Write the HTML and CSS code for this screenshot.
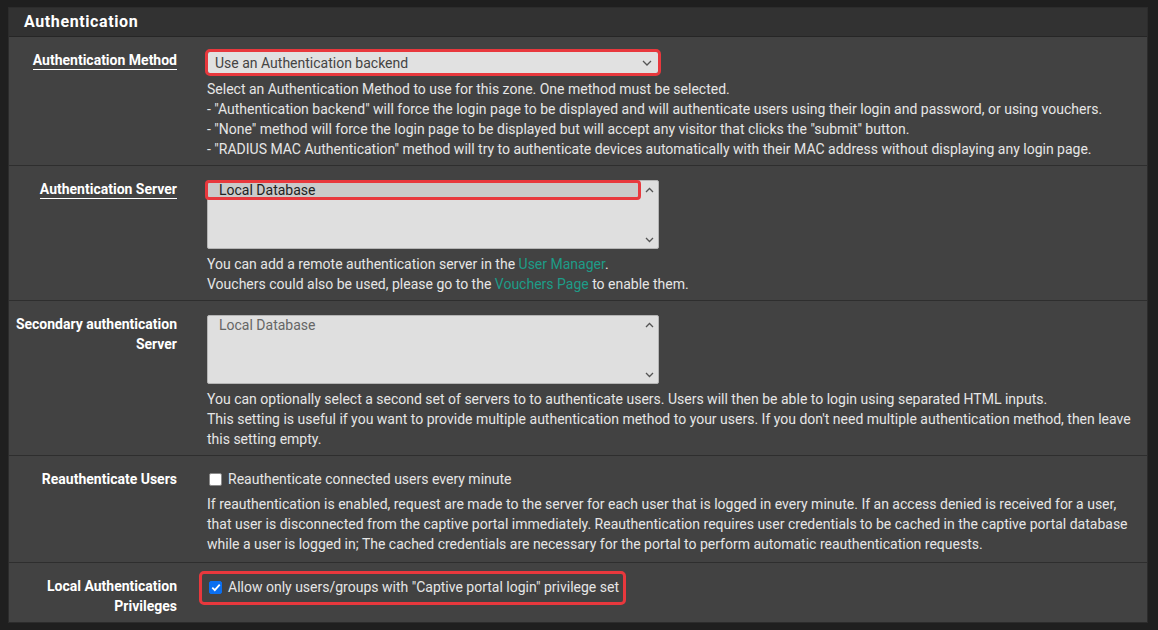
FILE: index.html
```html
<!DOCTYPE html>
<html lang="en">
<head>
  <meta charset="UTF-8" />
  <title>Captive Portal - Authentication</title>
  <link rel="stylesheet" href="styles.css">
</head>
<body>
  <div class="panel">
    <div class="panel-heading">Authentication</div>

    <div class="form-row">
      <div class="form-label"><span class="underlined">Authentication Method</span></div>
      <div class="form-field">
        <div class="highlight select-wrap">
          <div class="select">
            <span>Use an Authentication backend</span>
            <svg class="chevron" width="10" height="6" viewBox="0 0 10 6"><path d="M1 1l4 4 4-4" fill="none" stroke="#555" stroke-width="1.3"/></svg>
          </div>
        </div>
        <div class="help tight">
          Select an Authentication Method to use for this zone. One method must be selected.<br>
          - "Authentication backend" will force the login page to be displayed and will authenticate users using their login and password, or using vouchers.<br>
          - "None" method will force the login page to be displayed but will accept any visitor that clicks the "submit" button.<br>
          - "RADIUS MAC Authentication" method will try to authenticate devices automatically with their MAC address without displaying any login page.
        </div>
      </div>
    </div>

    <div class="form-row">
      <div class="form-label"><span class="underlined">Authentication Server</span></div>
      <div class="form-field">
        <div class="listbox">
          <div class="options">
            <div class="option selected highlight-option">Local Database</div>
          </div>
          <div class="scroller">
            <svg width="9" height="6" viewBox="0 0 9 6"><path d="M1 5l3.5-3.5L8 5" fill="none" stroke="#555" stroke-width="1.3"/></svg>
            <svg width="9" height="6" viewBox="0 0 9 6"><path d="M1 1l3.5 3.5L8 1" fill="none" stroke="#555" stroke-width="1.3"/></svg>
          </div>
        </div>
        <div class="help">
          You can add a remote authentication server in the <a href="#">User Manager</a>.<br>
          Vouchers could also be used, please go to the <a href="#">Vouchers Page</a> to enable them.
        </div>
      </div>
    </div>

    <div class="form-row">
      <div class="form-label">Secondary authentication Server</div>
      <div class="form-field">
        <div class="listbox">
          <div class="options">
            <div class="option muted">Local Database</div>
          </div>
          <div class="scroller">
            <svg width="9" height="6" viewBox="0 0 9 6"><path d="M1 5l3.5-3.5L8 5" fill="none" stroke="#555" stroke-width="1.3"/></svg>
            <svg width="9" height="6" viewBox="0 0 9 6"><path d="M1 1l3.5 3.5L8 1" fill="none" stroke="#555" stroke-width="1.3"/></svg>
          </div>
        </div>
        <div class="help">
          You can optionally select a second set of servers to to authenticate users. Users will then be able to login using separated HTML inputs.<br>
          This setting is useful if you want to provide multiple authentication method to your users. If you don't need multiple authentication method, then leave this setting empty.
        </div>
      </div>
    </div>

    <div class="form-row roomy">
      <div class="form-label">Reauthenticate Users</div>
      <div class="form-field">
        <label class="check">
          <span class="box"></span>
          Reauthenticate connected users every minute
        </label>
        <div class="help">
          If reauthentication is enabled, request are made to the server for each user that is logged in every minute. If an access denied is received for a user, that user is disconnected from the captive portal immediately. Reauthentication requires user credentials to be cached in the captive portal database while a user is logged in; The cached credentials are necessary for the portal to perform automatic reauthentication requests.
        </div>
      </div>
    </div>

    <div class="form-row last">
      <div class="form-label">Local Authentication Privileges</div>
      <div class="form-field">
        <label class="check highlight check-wrap">
          <span class="box checked">
            <svg width="10" height="9" viewBox="0 0 10 9"><path d="M1.3 4.6l2.5 2.5L8.7 1.6" fill="none" stroke="#fff" stroke-width="1.8"/></svg>
          </span>
          Allow only users/groups with "Captive portal login" privilege set
        </label>
      </div>
    </div>
  </div>
</body>
</html>
```

FILE: styles.css
```css
* {
  box-sizing: border-box;
  margin: 0;
  padding: 0;
}

body {
  background: #1f1f1f;
  font-family: Roboto, "Liberation Sans", Arial, sans-serif;
  font-size: 14px;
  color: #e6e6e6;
  padding: 7px 10px 0 8px;
}

.panel {
  background: #424242;
  border: 1px solid #2c2c2c;
}

.panel-heading {
  background: #323232;
  color: #fff;
  font-size: 16px;
  font-weight: 700;
  letter-spacing: 0.6px;
  padding: 5px 15px 5px;
  line-height: 18px;
  border-bottom: 1px solid #262626;
}

.form-row {
  display: flex;
  padding: 13px 0 6px;
  border-bottom: 1px solid #2e2e2e;
}

.form-row.roomy {
  padding-bottom: 8px;
}

.form-row.last {
  border-bottom: none;
}

.form-label {
  width: 168px;
  flex-shrink: 0;
  text-align: right;
  font-weight: 700;
  font-size: 14px;
  line-height: 20px;
  color: #fff;
}

.underlined {
  border-bottom: 1px solid #fff;
  padding-bottom: 1px;
}

.form-field {
  margin-left: 30px;
  flex: 1;
  padding-right: 12px;
}

.help {
  line-height: 20px;
  margin-top: 5px;
}

.help.tight {
  margin-top: 3px;
}

.help a {
  color: #1d9c88;
  text-decoration: none;
}

.highlight {
  border: 3px solid #e8383d;
  border-radius: 5px;
}

.select-wrap {
  width: 456px;
  margin: -1px 0 0 -2px;
}

.select {
  display: flex;
  align-items: center;
  justify-content: space-between;
  background: #e1e1e1;
  color: #444;
  height: 21px;
  padding: 0 6px 0 7px;
  border-radius: 2px;
}

.listbox {
  display: flex;
  width: 452px;
  height: 69px;
  margin-top: 1px;
  background: #dfdfdf;
  border: 1px solid #b5b5b5;
  border-radius: 2px;
}

.options {
  flex: 1;
  padding-top: 1px;
}

.option {
  line-height: 17px;
  padding-left: 12px;
  color: #222;
}

.option.muted {
  color: #666;
  padding-left: 11px;
}

.option.selected {
  background: #cacaca;
}

.highlight-option {
  border: 3px solid #e8383d;
  border-radius: 4px;
  margin: -2px 0 0 -3px;
  line-height: 14px;
  padding-left: 11px;
}

.scroller {
  width: 17px;
  display: flex;
  flex-direction: column;
  justify-content: space-between;
  align-items: center;
  padding: 6px 0 5px;
}

.check {
  display: flex;
  align-items: center;
  gap: 6px;
  line-height: 20px;
  padding-left: 2px;
}

.box {
  width: 13px;
  height: 13px;
  background: #fff;
  border: 1px solid #8a8a8a;
  border-radius: 2px;
  display: flex;
  align-items: center;
  justify-content: center;
}

.box.checked {
  background: #0b6ff0;
  border-color: #0b6ff0;
}

.check-wrap {
  width: 427px;
  margin: -5px 0 0 -8px;
  padding: 3px 0 5px 7px;
}
```
